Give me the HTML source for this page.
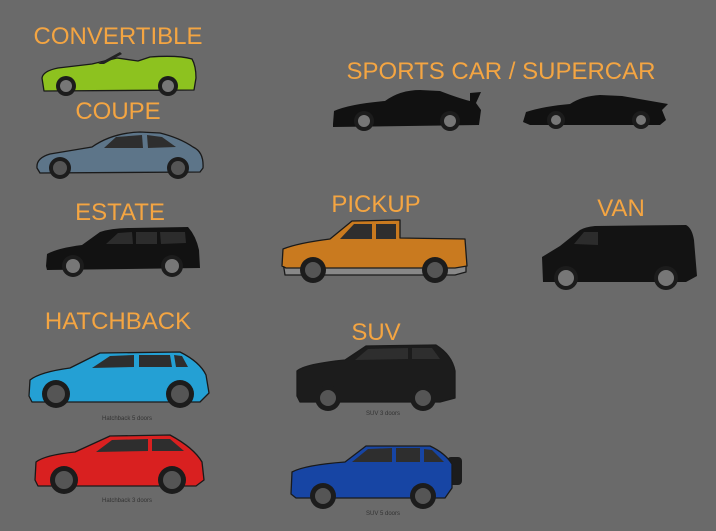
<!DOCTYPE html>
<html><head><style>
html,body{margin:0;padding:0;background:#6a6a6a;}
body{width:716px;height:531px;overflow:hidden;position:relative;}
svg{position:absolute;left:0;top:0;}
text{font-family:"Liberation Sans",sans-serif;}
.l{fill:#f4a542;font-size:24px;text-anchor:middle;}
.s{fill:#333;font-size:6px;text-anchor:middle;}
.o{stroke:#1a1a1a;stroke-width:1.3;stroke-linejoin:round;}
.w{fill:#2e2e2e;}
.t{fill:#1c1c1c;}
.h{fill:#777;}
.hb{fill:#555;}
</style></head><body>
<svg width="716" height="531" viewBox="0 0 716 531">
<text class="l" x="118" y="44">CONVERTIBLE</text>
<text class="l" x="118" y="119">COUPE</text>
<text class="l" x="120" y="220">ESTATE</text>
<text class="l" x="118" y="329">HATCHBACK</text>
<text class="l" x="501" y="79">SPORTS CAR / SUPERCAR</text>
<text class="l" x="376" y="212">PICKUP</text>
<text class="l" x="621" y="216">VAN</text>
<text class="l" x="376" y="340">SUV</text>
<text class="s" x="127" y="420">Hatchback 5 doors</text>
<text class="s" x="127" y="502">Hatchback 3 doors</text>
<text class="s" x="383" y="415">SUV 3 doors</text>
<text class="s" x="383" y="515">SUV 5 doors</text>

<path class="o" fill="#8dc21f" d="M42,78 Q43,71 58,68 L92,64 L117,58 L138,61 L150,57 Q178,55 192,59 Q196,66 196,78 L194,90 L44,91 Z"/>
<path d="M98,64 L120,52 L122,54 L104,64Z" fill="#222"/>
<circle class="t" cx="66" cy="86" r="10"/><circle class="h" cx="66" cy="86" r="6"/>
<circle class="t" cx="168" cy="86" r="10"/><circle class="h" cx="168" cy="86" r="6"/>

<path class="o" fill="#5d7589" d="M37,168 Q36,158 50,154 L92,147 Q112,133 140,132 L160,133 Q180,138 193,147 Q204,152 203,168 L200,172 L40,173 Z"/>
<path class="w" d="M104,148 L116,137 L142,135 L143,148Z M147,135 L162,137 L176,147 L148,148Z"/>
<circle class="t" cx="60" cy="168" r="11"/><circle class="hb" cx="60" cy="168" r="7"/>
<circle class="t" cx="178" cy="168" r="11"/><circle class="hb" cx="178" cy="168" r="7"/>

<path fill="#121212" d="M46,266 L47,254 Q58,248 82,245 L100,232 Q112,228 130,228 L188,227 Q196,236 199,250 L200,268 L47,270Z"/>
<path fill="#2c2c2c" d="M106,244 L118,233 L132,232 L133,244Z M136,232 L157,232 L157,244 L136,244Z M160,232 L185,232 L186,243 L161,244Z"/>
<circle class="t" cx="73" cy="266" r="11"/><circle class="h" cx="73" cy="266" r="7"/>
<circle class="t" cx="172" cy="266" r="11"/><circle class="h" cx="172" cy="266" r="7"/>

<path class="o" fill="#24a0d4" d="M29,396 L30,380 Q40,372 70,368 L100,353 L180,352 Q200,362 206,375 L209,393 L200,402 L32,402 Z"/>
<path class="w" d="M92,368 L110,356 L134,355 L134,367Z M139,355 L170,355 L172,367 L139,367Z M174,355 L182,356 L188,367 L176,367Z"/>
<circle class="t" cx="56" cy="394" r="14"/><circle class="hb" cx="56" cy="394" r="9"/>
<circle class="t" cx="180" cy="394" r="14"/><circle class="hb" cx="180" cy="394" r="9"/>

<path class="o" fill="#d92020" d="M35,480 L36,462 Q45,455 75,452 L110,436 L170,435 Q194,448 202,462 L204,480 L196,486 L38,486Z"/>
<path class="w" d="M96,452 L112,440 L148,439 L148,451Z M152,439 L170,439 L184,451 L152,451Z"/>
<circle class="t" cx="64" cy="480" r="14"/><circle class="hb" cx="64" cy="480" r="9"/>
<circle class="t" cx="172" cy="480" r="14"/><circle class="hb" cx="172" cy="480" r="9"/>

<path fill="#111" d="M333,124 L334,111 Q350,104 385,101 Q400,90 420,90 L440,91 Q458,98 470,101 L470,93 L481,92 L476,103 L481,110 L479,125 L333,127Z"/>
<circle class="t" cx="364" cy="121" r="10"/><circle class="h" cx="364" cy="121" r="6"/>
<circle class="t" cx="450" cy="121" r="10"/><circle class="h" cx="450" cy="121" r="6"/>

<path fill="#111" d="M523,122 L526,112 Q545,106 570,104 Q582,96 600,95 L622,96 Q645,100 668,104 L662,110 L666,120 L660,125 L530,125Z"/>
<circle class="t" cx="556" cy="120" r="9"/><circle class="h" cx="556" cy="120" r="5"/>
<circle class="t" cx="641" cy="120" r="9"/><circle class="h" cx="641" cy="120" r="5"/>

<path fill="#888" class="o" d="M283,262 L466,262 L466,272 L455,275 L285,275Z"/>
<path class="o" fill="#c97a1f" d="M282,266 L283,249 Q298,243 330,239 L352,221 L400,220 L400,238 L465,239 L467,266 L455,268 L286,268Z"/>
<path class="w" d="M340,239 L354,224 L372,224 L372,239Z M376,224 L396,224 L396,239 L376,239Z"/>
<circle class="t" cx="313" cy="270" r="13"/><circle class="hb" cx="313" cy="270" r="8"/>
<circle class="t" cx="435" cy="270" r="13"/><circle class="hb" cx="435" cy="270" r="8"/>

<path fill="#131313" d="M543,282 L542,257 L560,246 L580,230 Q585,227 595,226 L686,225 Q692,228 694,240 L697,276 L686,282Z"/>
<path fill="#2c2c2c" d="M574,244 L584,232 L598,232 L598,245Z"/>
<circle class="t" cx="566" cy="278" r="12"/><circle class="h" cx="566" cy="278" r="8"/>
<circle class="t" cx="666" cy="278" r="12"/><circle class="h" cx="666" cy="278" r="8"/>

<path class="o" fill="#1c1c1c" d="M297,396 L297,371 Q305,364 345,360 L366,346 L436,345 Q452,355 455,371 L455,398 L440,402 L300,402Z"/>
<path fill="#2e2e2e" d="M355,360 L368,349 L408,348 L408,359Z M412,348 L432,348 L440,359 L412,359Z"/>
<circle class="t" cx="328" cy="398" r="13"/><circle class="hb" cx="328" cy="398" r="8"/>
<circle class="t" cx="423" cy="398" r="13"/><circle class="hb" cx="423" cy="398" r="8"/>

<rect x="447" y="457" width="15" height="28" rx="4" fill="#1c1c1c"/>
<path class="o" fill="#1745a4" d="M291,494 L292,472 Q305,465 345,462 L366,446 L430,446 Q445,453 452,464 L452,488 L445,498 L296,498Z"/>
<path class="w" d="M352,462 L368,449 L392,448 L392,462Z M396,448 L420,448 L420,462 L396,462Z M424,449 L432,450 L444,462 L424,462Z"/>
<circle class="t" cx="323" cy="496" r="13"/><circle class="hb" cx="323" cy="496" r="8"/>
<circle class="t" cx="423" cy="496" r="13"/><circle class="hb" cx="423" cy="496" r="8"/>
</svg>
</body></html>
